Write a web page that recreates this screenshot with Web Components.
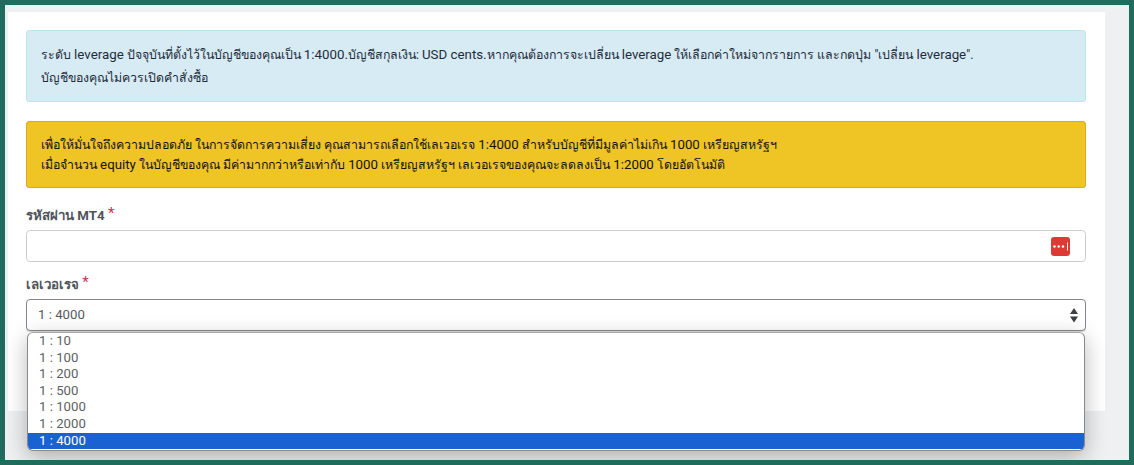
<!DOCTYPE html>
<html lang="th">
<head>
<meta charset="utf-8">
<style>
    html, body { margin: 0; padding: 0; }
    body { font-family: Roboto, "Noto Sans", "Liberation Sans", sans-serif; }
</style>
</head>
<body>
<app-frame>
    <form-card>
        <info-alert>
            <div>ระดับ <en-text>leverage</en-text> ปัจจุบันที่ตั้งไว้ในบัญชีของคุณเป็น <en-text>1:4000.</en-text>บัญชีสกุลเงิน: <en-text>USD cents.</en-text>หากคุณต้องการจะเปลี่ยน <en-text>leverage</en-text> ให้เลือกค่าใหม่จากรายการ และกดปุ่ม "เปลี่ยน <en-text>leverage</en-text>".</div>
            <div>บัญชีของคุณไม่ควรเปิดคำสั่งซื้อ</div>
        </info-alert>
        <warn-alert>
            <div>เพื่อให้มั่นใจถึงความปลอดภัย ในการจัดการความเสี่ยง คุณสามารถเลือกใช้เลเวอเรจ <en-text>1:4000</en-text> สำหรับบัญชีที่มีมูลค่าไม่เกิน <en-text>1000</en-text> เหรียญสหรัฐฯ</div>
            <div>เมื่อจำนวน <en-text>equity</en-text> ในบัญชีของคุณ มีค่ามากกว่าหรือเท่ากับ <en-text>1000</en-text> เหรียญสหรัฐฯ เลเวอเรจของคุณจะลดลงเป็น <en-text>1:2000</en-text> โดยอัตโนมัติ</div>
        </warn-alert>
        <form-field label="รหัสผ่าน MT4">
            <password-input></password-input>
        </form-field>
        <form-field label="เลเวอเรจ">
            <select-open value="1 : 4000" options="1 : 10,1 : 100,1 : 200,1 : 500,1 : 1000,1 : 2000,1 : 4000"></select-open>
        </form-field>
    </form-card>
</app-frame>

<script>
const frameTemplate = document.createElement("template");
frameTemplate.innerHTML = `
    <style>
        :host {
            display: block;
            box-sizing: border-box;
            width: 1134px;
            height: 465px;
            padding: 7px 24px 50px 3px;
            border: 5px solid #1f6b5c;
            background: #eef0f2;
            overflow: hidden;
        }
    </style>
    <slot></slot>
`;

class AppFrame extends HTMLElement {
    constructor() {
        super();
        this.attachShadow({ mode: "open" });
        this.shadowRoot.appendChild(frameTemplate.content.cloneNode(true));
    }
}

const cardTemplate = document.createElement("template");
cardTemplate.innerHTML = `
    <style>
        :host {
            display: flex;
            flex-direction: column;
            box-sizing: border-box;
            height: 399px;
            padding: 18px 19px 0 18px;
            background: #fff;
        }
    </style>
    <slot></slot>
`;

class FormCard extends HTMLElement {
    constructor() {
        super();
        this.attachShadow({ mode: "open" });
        this.shadowRoot.appendChild(cardTemplate.content.cloneNode(true));
    }
}

// latin runs are a bit bigger than the thai around them in the reference
// no whitespace around the slot, this one is inline and it would show as a space
const enTemplate = document.createElement("template");
enTemplate.innerHTML = `<style>
        :host {
            display: inline;
            font-size: 13.3px;
        }
    </style><slot></slot>`;

class EnText extends HTMLElement {
    constructor() {
        super();
        this.attachShadow({ mode: "open" });
        this.shadowRoot.appendChild(enTemplate.content.cloneNode(true));
    }
}

const infoTemplate = document.createElement("template");
infoTemplate.innerHTML = `
    <style>
        :host {
            display: block;
            box-sizing: border-box;
            height: 72px;
            margin-bottom: 19px;
            padding: 12px 14px 0;
            border: 1px solid #bee5eb;
            border-radius: 3px;
            background: #d7ebf5;
            color: #1d2c3a;
            font-size: 12.38px;
            line-height: 23px;
        }
    </style>
    <slot></slot>
`;

class InfoAlert extends HTMLElement {
    constructor() {
        super();
        this.attachShadow({ mode: "open" });
        this.shadowRoot.appendChild(infoTemplate.content.cloneNode(true));
    }
}

const warnTemplate = document.createElement("template");
warnTemplate.innerHTML = `
    <style>
        :host {
            display: block;
            box-sizing: border-box;
            height: 67px;
            margin-bottom: 18px;
            padding: 13px 14px;
            border: 1px solid #dba81e;
            border-radius: 3px;
            background: #eec524;
            color: #15120a;
            font-size: 12.38px;
            line-height: 19px;
        }
    </style>
    <slot></slot>
`;

class WarnAlert extends HTMLElement {
    constructor() {
        super();
        this.attachShadow({ mode: "open" });
        this.shadowRoot.appendChild(warnTemplate.content.cloneNode(true));
    }
}

const fieldTemplate = document.createElement("template");
fieldTemplate.innerHTML = `
    <style>
        :host {
            display: block;
            margin-bottom: 13px;
        }

        .label {
            display: block;
            height: 24px;
            line-height: 18px;
            font-size: 13.3px;
            font-weight: 700;
            color: #50545a;
        }

        .star {
            position: relative;
            top: -2px;
            color: #c8314f;
            font-size: 15px;
            font-weight: 400;
        }
    </style>
    <span class="label"><span id="text"></span> <span class="star">*</span></span>
    <slot></slot>
`;

class FormField extends HTMLElement {
    constructor() {
        super();
        this.attachShadow({ mode: "open" });
        this.shadowRoot.appendChild(fieldTemplate.content.cloneNode(true));
        this.text = this.shadowRoot.querySelector("#text");
    }

    connectedCallback() {
        this.text.textContent = this.getAttribute("label") ?? "";
    }
}

const passwordTemplate = document.createElement("template");
passwordTemplate.innerHTML = `
    <style>
        :host {
            display: flex;
            align-items: center;
            justify-content: flex-end;
            box-sizing: border-box;
            height: 32px;
            padding-right: 15px;
            border: 1px solid #ccc;
            border-radius: 4px;
            background: #fff;
        }

        svg {
            display: block;
        }
    </style>
    <svg width="19" height="19" viewBox="0 0 19 19">
        <rect width="19" height="19" rx="3" fill="#de3a35"/>
        <circle cx="3.500" cy="9.500" r="1.200" fill="#fff"/>
        <circle cx="7.700" cy="9.500" r="1.200" fill="#fff"/>
        <circle cx="12" cy="9.500" r="1.200" fill="#fff"/>
        <rect x="16" y="5.500" width="1" height="8" fill="#fff"/>
    </svg>
`;

class PasswordInput extends HTMLElement {
    constructor() {
        super();
        this.attachShadow({ mode: "open" });
        this.shadowRoot.appendChild(passwordTemplate.content.cloneNode(true));
    }
}

const selectTemplate = document.createElement("template");
selectTemplate.innerHTML = `
    <style>
        :host {
            display: block;
            position: relative;
        }

        .box {
            display: flex;
            align-items: center;
            justify-content: space-between;
            box-sizing: border-box;
            height: 32px;
            padding: 0 6px 1px 11px;
            border: 1px solid #85888c;
            border-radius: 4px;
            background: #fff;
            box-shadow: 0 1px 1px rgba(0, 0, 0, 0.15);
            color: #55595e;
            font-size: 13.2px;
        }

        .menu {
            position: absolute;
            top: 33px;
            left: 1px;
            right: 1px;
            box-sizing: border-box;
            height: 119px;
            border: 1px solid #8a8a8a;
            border-top-color: #a5a5a5;
            border-radius: 6px;
            background: #fff;
            box-shadow: 0 6px 22px rgba(0, 0, 0, 0.28);
            overflow: hidden;
            color: #5c5f63;
            font-size: 13.2px;
        }

        .option {
            height: 16.6px;
            line-height: 16.6px;
            padding-left: 11px;
        }

        .option.selected {
            background: #1a62d2;
            color: #fff;
        }
    </style>
    <div class="box">
        <span id="value"></span>
        <svg width="10" height="16" viewBox="0 0 10 16">
            <path d="M5 1 9 7H1Z M1 9.500H9L5 15.500Z" fill="#3d4042"/>
        </svg>
    </div>
    <div class="menu" id="menu"></div>
`;

class SelectOpen extends HTMLElement {
    constructor() {
        super();
        this.attachShadow({ mode: "open" });
        this.shadowRoot.appendChild(selectTemplate.content.cloneNode(true));
        this.value = this.shadowRoot.querySelector("#value");
        this.menu = this.shadowRoot.querySelector("#menu");
    }

    connectedCallback() {
        const value = this.getAttribute("value") ?? "";
        const options = (this.getAttribute("options") ?? "").split(",");

        this.value.textContent = value;
        for (const text of options) {
            const row = document.createElement("div");
            row.className = text === value ? "option selected" : "option";
            row.textContent = text;
            this.menu.appendChild(row);
        }
    }
}

customElements.define("app-frame", AppFrame);
customElements.define("form-card", FormCard);
customElements.define("en-text", EnText);
customElements.define("info-alert", InfoAlert);
customElements.define("warn-alert", WarnAlert);
customElements.define("form-field", FormField);
customElements.define("password-input", PasswordInput);
customElements.define("select-open", SelectOpen);
</script>
</body>
</html>
